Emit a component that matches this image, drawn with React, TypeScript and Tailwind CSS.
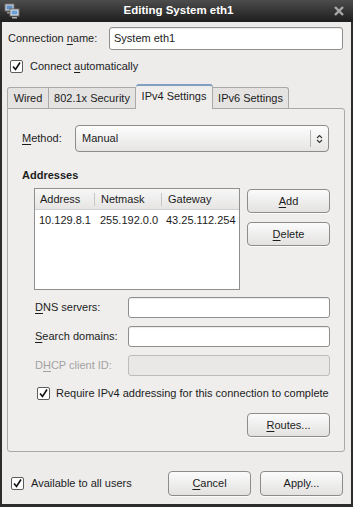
import React from "react";

const U = ({ children }: { children: React.ReactNode }) => (
  <span className="underline underline-offset-[2px]">{children}</span>
);

const Check = () => (
  <div className="w-[13px] h-[13px] shrink-0 border border-[#5c5c5c] bg-white rounded-[2px] flex items-center justify-center">
    <svg width="11" height="11" viewBox="0 0 11 11">
      <path d="M2 5.5 L4.5 8.5 L9 1.5" fill="none" stroke="#111" strokeWidth="1.6" />
    </svg>
  </div>
);

const Button = ({ children, className }: { children: React.ReactNode; className?: string }) => (
  <div
    className={`w-[83px] h-[24px] shrink-0 flex items-center justify-center rounded-[4px] border border-[#8c8c8c] bg-gradient-to-b from-[#fbfbfb] to-[#e3e2e1] shadow-[0_1px_0_rgba(255,255,255,0.8)] ${className ?? ""}`}
  >
    {children}
  </div>
);

const Field = ({ disabled }: { disabled?: boolean }) => (
  <div
    className={
      disabled
        ? "w-[202px] h-[21px] rounded-[3px] border border-[#bdbcbb] bg-[#e9e8e7]"
        : "w-[202px] h-[21px] rounded-[3px] border border-[#8f8f8f] bg-white shadow-[inset_0_1px_1px_rgba(0,0,0,0.08)]"
    }
  />
);

const NetIcon = () => (
  <svg width="16" height="16" viewBox="0 0 16 16">
    <rect x="1" y="1" width="9" height="7" fill="#d8d8d8" stroke="#6b6b6b" strokeWidth="1" />
    <rect x="2.5" y="2.5" width="6" height="4" fill="#5b8fc7" />
    <rect x="3" y="9" width="5" height="1.5" fill="#9a9a9a" />
    <rect x="6" y="6" width="9" height="7" fill="#e6e6e6" stroke="#6b6b6b" strokeWidth="1" />
    <rect x="7.5" y="7.5" width="6" height="4" fill="#6aa0d8" />
    <rect x="8" y="14" width="5" height="1.5" fill="#b0b0b0" />
  </svg>
);

export default function App() {
  return (
    <div className="w-[353px] h-[507px] flex flex-col font-['Liberation_Sans',Arial,sans-serif] text-[11px] text-[#1c1c1c] bg-white">
      {/* title bar */}
      <div className="h-[22px] shrink-0 flex items-center px-[4px] bg-gradient-to-b from-[#4d4d4d] to-[#1e1e1e]">
        <NetIcon />
        <div className="flex-1 text-center text-white font-bold text-[11.5px] pl-[4px]">Editing System eth1</div>
        <svg width="12" height="12" viewBox="0 0 12 12" className="mr-[4px]">
          <path d="M2 2 L10 10 M10 2 L2 10" stroke="#a9a9a9" strokeWidth="2.4" />
        </svg>
      </div>

      <div className="flex-1 flex flex-col bg-[#edeceb] border-x-2 border-b-[3px] border-[#2c2c2c]">
        {/* connection name */}
        <div className="mt-[5px] h-[23px] flex items-center pl-[6px] pr-[8px]">
          <span>
            Connection <U>n</U>ame:
          </span>
          <div className="ml-auto w-[234px] h-[23px] rounded-[3px] border border-[#8f8f8f] bg-white flex items-center px-[4px] shadow-[inset_0_1px_1px_rgba(0,0,0,0.08)]">
            System eth1
          </div>
        </div>

        <div className="mt-[10px] h-[13px] flex items-center gap-[7px] pl-[8px]">
          <Check />
          <span>
            Connect <U>a</U>utomatically
          </span>
        </div>

        {/* tabs */}
        <div className="mt-[11px] ml-[5px] h-[24px] flex items-end">
          <div className="h-[21px] w-[42px] flex items-center justify-center border border-b-0 border-[#a9a9a9] rounded-tl-[3px] bg-[#e4e3e2]">
            Wired
          </div>
          <div className="h-[21px] w-[87px] flex items-center justify-center border border-b-0 border-l-0 border-[#a9a9a9] bg-[#e4e3e2]">
            802.1x Security
          </div>
          <div className="relative z-10 h-[25px] -mb-px w-[77px] flex items-center justify-center border border-b-0 border-l-0 border-[#a9a9a9] border-t-2 border-t-[#7f9ec2] rounded-t-[3px] bg-[#efeeed] pb-[2px]">
            IPv4 Settings
          </div>
          <div className="h-[21px] w-[76px] flex items-center justify-center border border-b-0 border-l-0 border-[#a9a9a9] rounded-tr-[3px] bg-[#e4e3e2]">
            IPv6 Settings
          </div>
        </div>

        {/* panel */}
        <div className="ml-[5px] w-[338px] h-[344px] shrink-0 flex flex-col border border-[#a9a9a9] rounded-b-[3px] rounded-tr-[3px] bg-[#efeeed]">
          <div className="mt-[16px] h-[27px] flex items-center pl-[14px]">
            <span className="w-[53px]">
              <U>M</U>ethod:
            </span>
            <div className="w-[254px] h-[27px] rounded-[4px] border border-[#8c8c8c] bg-gradient-to-b from-[#fdfdfd] to-[#e6e5e4] flex items-center pl-[6px]">
              <span className="flex-1">Manual</span>
              <div className="h-[17px] w-px bg-[#b5b5b5]" />
              <svg width="17" height="12" viewBox="0 0 17 12">
                <path d="M6 5 L8.5 2.5 L11 5 M6 7 L8.5 9.5 L11 7" fill="none" stroke="#3a3a3a" strokeWidth="1.2" />
              </svg>
            </div>
          </div>

          <div className="mt-[17px] pl-[14px] font-bold leading-[13px]">Addresses</div>

          <div className="mt-[6px] flex pl-[26px]">
            <div className="w-[206px] h-[102px] border border-[#8f8f8f] bg-white flex flex-col">
              <div className="h-[21px] flex items-center bg-gradient-to-b from-[#f7f7f7] to-[#e6e5e4] border-b border-[#d0cfce]">
                <div className="w-[59px] pl-[5px]">Address</div>
                <div className="h-[13px] w-px bg-[#c6c6c6]" />
                <div className="w-[66px] pl-[6px]">Netmask</div>
                <div className="h-[13px] w-px bg-[#c6c6c6]" />
                <div className="pl-[6px]">Gateway</div>
              </div>
              <div className="h-[20px] flex items-center">
                <div className="w-[60px] pl-[4px]">10.129.8.1</div>
                <div className="w-[66px] pl-[5px]">255.192.0.0</div>
                <div className="pl-[5px]">43.25.112.254</div>
              </div>
            </div>
            <div className="ml-[7px] flex flex-col">
              <Button className="mt-[1px]">
                <U>A</U>dd
              </Button>
              <Button className="mt-[9px]">
                <U>D</U>elete
              </Button>
            </div>
          </div>

          <div className="mt-[7px] pl-[27px] grid grid-cols-[93px_202px] gap-y-[8px] items-center">
            <span>
              <U>D</U>NS servers:
            </span>
            <Field />
            <span>
              <U>S</U>earch domains:
            </span>
            <Field />
            <span className="text-[#a3a2a1]">
              D<U>H</U>CP client ID:
            </span>
            <Field disabled />
          </div>

          <div className="mt-[11px] h-[13px] flex items-center gap-[6px] pl-[29px]">
            <Check />
            <span>Require IPv4 addressing for this connection to complete</span>
          </div>

          <div className="mt-[13px] flex justify-end pr-[14px]">
            <Button>
              <U>R</U>outes...
            </Button>
          </div>
        </div>

        {/* bottom */}
        <div className="mt-[19px] flex items-center pl-[9px] pr-[8px]">
          <Check />
          <span className="ml-[7px]">Available to all users</span>
          <Button className="ml-auto h-[25px]">
            <U>C</U>ancel
          </Button>
          <Button className="ml-[9px] h-[25px]">Apply...</Button>
        </div>
      </div>
    </div>
  );
}
